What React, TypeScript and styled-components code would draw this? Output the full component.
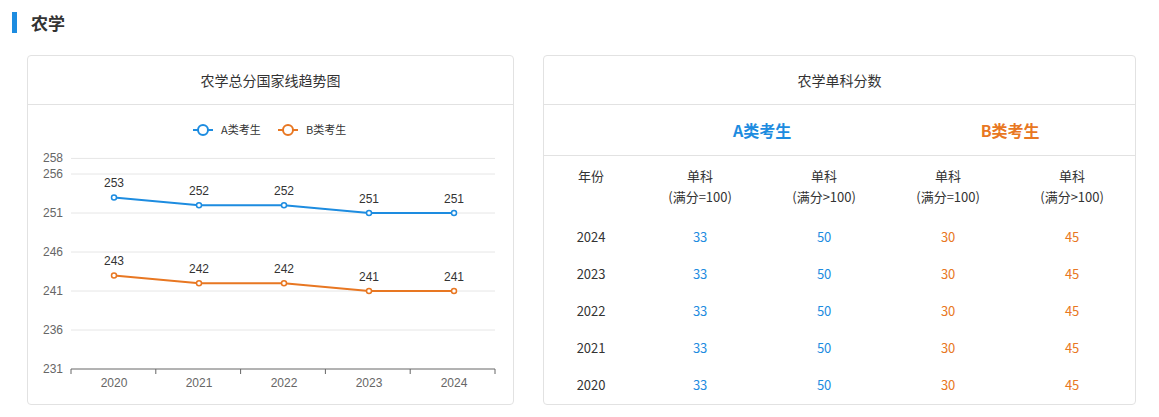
import React from "react";
import styled, { createGlobalStyle } from "styled-components";

const G = createGlobalStyle`
  body { margin: 0; background: #fff; font-family: "Noto Sans CJK SC", "Liberation Sans", sans-serif; color: #333; }
`;
const BLUE = "#1d8ce0";
const ORANGE = "#e87722";

const Page = styled.div`padding: 12px 23px 0 12px; width: 1159px; box-sizing: border-box;`;
const Heading = styled.div`
  display: flex; align-items: center; height: 21px; gap: 14px;
  font-size: 17px; font-weight: 700; color: #333;
  &::before { content: ""; width: 5px; height: 21px; background: ${BLUE}; }
`;
const Row = styled.div`display: flex; gap: 29px; margin: 22px 0 0 15px;`;
const Card = styled.div<{ w: number }>`
  width: ${p => p.w}px; height: 350px; box-sizing: border-box;
  border: 1px solid #e2e2e2; border-radius: 4px; overflow: hidden;
`;
const CardTitle = styled.div`
  height: 48px; border-bottom: 1px solid #e2e2e2; display: flex; align-items: center; justify-content: center;
  font-size: 14px; color: #333;
`;
const GroupRow = styled.div`
  display: grid; grid-template-columns: 94px 248px 248px; height: 50px; border-bottom: 1px solid #e2e2e2;
  align-items: center; text-align: center;
`;
const Group = styled.div<{ c: string }>`color: ${p => p.c}; font-weight: 700; font-size: 16px;`;
const Table = styled.div`display: grid; grid-template-columns: 94px repeat(4, 124px); text-align: center; font-size: 13px; padding-top: 9px;`;
const HeadCell = styled.div`line-height: 21px; height: 53px; color: #333;`;
const Cell = styled.div<{ c?: string }>`height: 37px; line-height: 37px; color: ${p => p.c || "#333"};`;

const A = [253, 252, 252, 251, 251];
const B = [243, 242, 242, 241, 241];
const years = [2020, 2021, 2022, 2023, 2024];

function Chart() {
  const xs = years.map((_, i) => 86 + i * 85);
  const ticks = [258, 256, 251, 246, 241, 236, 231];
  const y = (v: number) => 264 - (v - 231) * 7.8;
  const line = (d: number[]) => d.map((v, i) => `${i ? "L" : "M"}${xs[i]},${y(v)}`).join(" ");
  return (
    <svg width="486" height="300" style={{ display: "block" }} fontFamily="Liberation Sans, sans-serif">
      <line x1={165} x2={185} y1={25} y2={25} stroke={BLUE} strokeWidth={2} />
      <circle cx={175} cy={25} r={5} fill="#fff" stroke={BLUE} strokeWidth={2} />
      <text x={193} y={29} fontSize={11} fill="#333" fontFamily="Noto Sans CJK SC">A类考生</text>
      <line x1={250} x2={270} y1={25} y2={25} stroke={ORANGE} strokeWidth={2} />
      <circle cx={260} cy={25} r={5} fill="#fff" stroke={ORANGE} strokeWidth={2} />
      <text x={278} y={29} fontSize={11} fill="#333" fontFamily="Noto Sans CJK SC">B类考生</text>
      {ticks.map(t => (
        <g key={t}>
          {t !== 231 && <line x1={43} x2={467} y1={y(t)} y2={y(t)} stroke="#e6e6e6" />}
          <text x={35} y={y(t) + 4} fontSize={12} fill="#666" textAnchor="end">{t}</text>
        </g>
      ))}
      <line x1={43} x2={467} y1={y(231)} y2={y(231)} stroke="#666" />
      {[0, 1, 2, 3, 4, 5].map(i => (
        <line key={i} x1={43 + i * 84.8} x2={43 + i * 84.8} y1={y(231)} y2={y(231) + 5} stroke="#666" />
      ))}
      {years.map((yr, i) => (
        <text key={yr} x={xs[i]} y={y(231) + 18} fontSize={12} fill="#666" textAnchor="middle">{yr}</text>
      ))}
      {[{ d: A, c: BLUE }, { d: B, c: ORANGE }].map(({ d, c }) => (
        <g key={c}>
          <path d={line(d)} fill="none" stroke={c} strokeWidth={2} />
          {d.map((v, i) => (
            <g key={i}>
              <circle cx={xs[i]} cy={y(v)} r={2.5} fill="#fff" stroke={c} strokeWidth={1.5} />
              <text x={xs[i]} y={y(v) - 10} fontSize={12} fill="#333" textAnchor="middle">{v}</text>
            </g>
          ))}
        </g>
      ))}
    </svg>
  );
}

const rows = [2024, 2023, 2022, 2021, 2020];

export default function App() {
  return (
    <Page>
      <G />
      <Heading>农学</Heading>
      <Row>
        <Card w={488}>
          <CardTitle>农学总分国家线趋势图</CardTitle>
          <Chart />
        </Card>
        <Card w={594}>
          <CardTitle>农学单科分数</CardTitle>
          <GroupRow>
            <div />
            <Group c={BLUE}>A类考生</Group>
            <Group c={ORANGE}>B类考生</Group>
          </GroupRow>
          <Table>
            <HeadCell>年份</HeadCell>
            <HeadCell>单科<br />(满分=100)</HeadCell>
            <HeadCell>单科<br />(满分&gt;100)</HeadCell>
            <HeadCell>单科<br />(满分=100)</HeadCell>
            <HeadCell>单科<br />(满分&gt;100)</HeadCell>
            {rows.map(r => (
              <React.Fragment key={r}>
                <Cell>{r}</Cell>
                <Cell c={BLUE}>33</Cell>
                <Cell c={BLUE}>50</Cell>
                <Cell c={ORANGE}>30</Cell>
                <Cell c={ORANGE}>45</Cell>
              </React.Fragment>
            ))}
          </Table>
        </Card>
      </Row>
    </Page>
  );
}
